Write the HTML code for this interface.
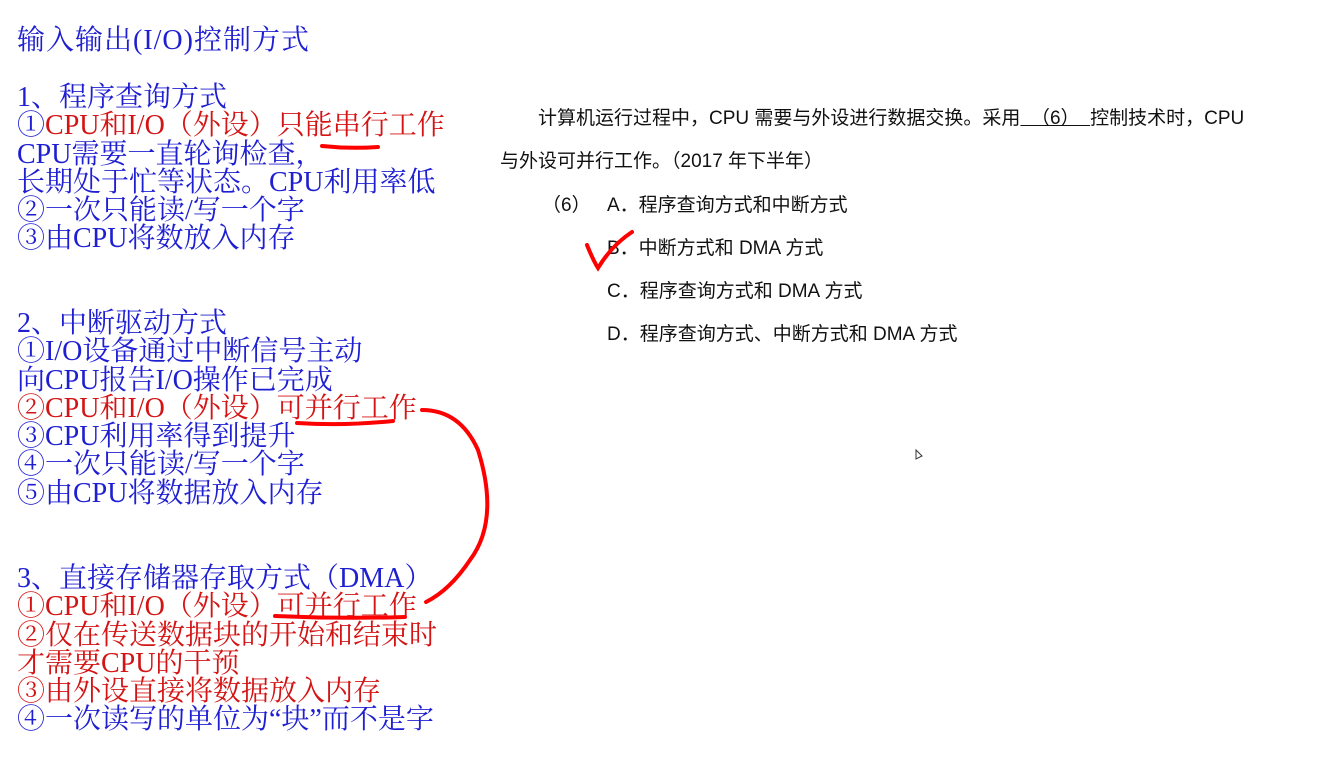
<!DOCTYPE html>
<html><head><meta charset="utf-8"><style>
body{margin:0;width:1331px;height:784px;background:#fff;overflow:hidden;position:relative}
.l{position:absolute;left:17px;font-family:"Liberation Serif","Noto Serif CJK SC",serif;font-size:28px;line-height:28.3px;color:#1e1ed2;white-space:nowrap}
.r{color:#d41414}
.q{position:absolute;font-family:"Liberation Sans","Noto Sans CJK SC",sans-serif;font-size:19px;color:#111;white-space:nowrap;line-height:22px}
</style></head><body>
<div class="l" style="top:27px;letter-spacing:1px">输入输出(I/O)控制方式</div>
<div class="l" style="top:84px">1、程序查询方式<br>①<span class="r">CPU和I/O（外设）只能串行工作</span><br>CPU需要一直轮询检查，<br>长期处于忙等状态。CPU利用率低<br>②一次只能读/写一个字<br>③由CPU将数放入内存</div>
<div class="l" style="top:310px">2、中断驱动方式<br>①I/O设备通过中断信号主动<br>向CPU报告I/O操作已完成<br><span class="r">②CPU和I/O（外设）可并行工作</span><br>③CPU利用率得到提升<br>④一次只能读/写一个字<br>⑤由CPU将数据放入内存</div>
<div class="l" style="top:565px">3、直接存储器存取方式（DMA）<br><span class="r">①CPU和I/O（外设）可并行工作<br>②仅在传送数据块的开始和结束时<br>才需要CPU的干预<br>③由外设直接将数据放入内存</span><br>④一次读写的单位为“块”而不是字</div>
<div class="q" style="left:538px;top:108px">计算机运行过程中，CPU 需要与外设进行数据交换。采用<span style="text-decoration:underline">&nbsp;&nbsp;（6）&nbsp;&nbsp;</span>控制技术时，CPU</div>
<div class="q" style="left:500px;top:151px">与外设可并行工作。（2017 年下半年）</div>
<div class="q" style="left:542px;top:195px">（6）</div>
<div class="q" style="left:607px;top:195px">A．程序查询方式和中断方式</div>
<div class="q" style="left:607px;top:238px">B．中断方式和 DMA 方式</div>
<div class="q" style="left:607px;top:281px">C．程序查询方式和 DMA 方式</div>
<div class="q" style="left:607px;top:324px">D．程序查询方式、中断方式和 DMA 方式</div>
<svg width="1331" height="784" style="position:absolute;left:0;top:0" fill="none" stroke="#f00" stroke-width="4" stroke-linecap="round">
<path d="M322 146 Q350 149 378 147"/>
<path d="M297 423 Q345 426 393 421"/>
<path d="M275 616 Q340 619 405 617"/>
<path d="M422 410 Q460 410 478 450 Q500 520 470 560 Q450 590 426 602"/>
<path d="M587 245 Q593 260 598 268 Q612 245 632 232"/>
<path d="M916 450 L916 459 L922 456 Z" stroke="#333" stroke-width="1"/>
</svg>
</body></html>
